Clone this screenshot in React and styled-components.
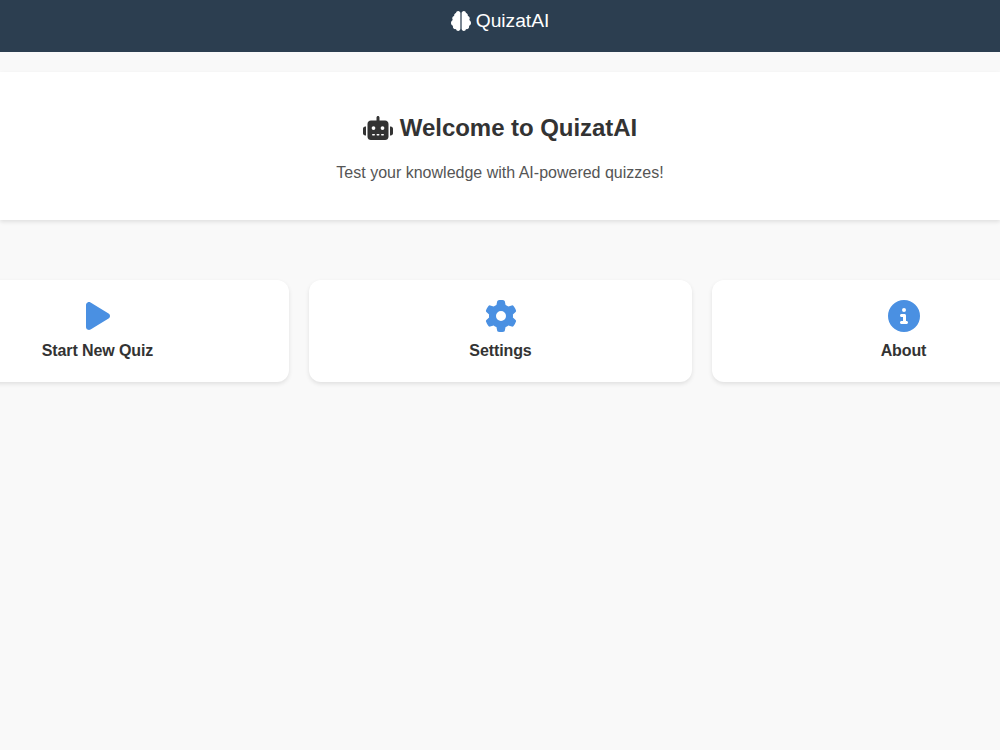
import styled, { createGlobalStyle } from "styled-components";
import { FaBrain, FaCircleInfo, FaGear, FaPlay, FaRobot } from "react-icons/fa6";

const GlobalStyle = createGlobalStyle`
  html, body {
    margin: 0;
    padding: 0;
    overflow-x: hidden;
  }

  body {
    background-color: #f9f9f9;
    color: #333;
    font-family: "Liberation Sans", Arial, sans-serif;
  }
`;

const Page = styled.div`
  min-height: 750px;
  display: flex;
  flex-direction: column;
  align-items: center;
`;

const Header = styled.header`
  width: 100%;
  height: 52px;
  padding-top: 10px;
  box-sizing: border-box;
  background-color: #2c3e50;
  color: #fff;
  display: flex;
  justify-content: center;
  align-items: flex-start;
  gap: 5px;
  font-size: 19.2px;
  line-height: 22px;

  svg {
    font-size: 20px;
    margin-top: 1px;
  }
`;

const Hero = styled.section`
  align-self: stretch;
  height: 148px;
  margin-top: 20px;
  background-color: #fff;
  box-shadow: 0 2px 4px rgba(0, 0, 0, 0.1);
  display: flex;
  flex-direction: column;
  align-items: center;
  padding-top: 41px;
  box-sizing: border-box;
`;

const Title = styled.h1`
  margin: 0;
  display: flex;
  align-items: center;
  gap: 7px;
  font-size: 24px;
  line-height: 30px;
  font-weight: 700;
  letter-spacing: -0.05px;

  svg {
    font-size: 30px;
  }
`;

const Subtitle = styled.p`
  margin: 20px 0 0;
  font-size: 16px;
  line-height: 20px;
  color: #555;
`;

const Menu = styled.nav`
  display: flex;
  justify-content: center;
  gap: 20px;
  margin-top: 60px;
  padding-left: 1px;
  box-sizing: border-box;
  width: 100%;
`;

const MenuCard = styled.a`
  flex: 0 0 383px;
  height: 102px;
  padding-top: 20px;
  box-sizing: border-box;
  background-color: #fff;
  border-radius: 12px;
  box-shadow: 0 2px 4px rgba(0, 0, 0, 0.1);
  display: flex;
  flex-direction: column;
  align-items: center;
  gap: 9px;
  font-size: 16px;
  line-height: 20px;
  font-weight: 700;
  letter-spacing: -0.1px;
  color: #333;

  svg {
    color: #4a90e2;
    font-size: 32px;
  }
`;

const items = [
  { label: "Start New Quiz", icon: <FaPlay /> },
  { label: "Settings", icon: <FaGear /> },
  { label: "About", icon: <FaCircleInfo /> },
];

const App = () => {
  return (
    <Page>
      <GlobalStyle />
      <Header>
        <FaBrain />
        <span>QuizatAI</span>
      </Header>
      <Hero>
        <Title>
          <FaRobot />
          Welcome to QuizatAI
        </Title>
        <Subtitle>Test your knowledge with AI-powered quizzes!</Subtitle>
      </Hero>
      <Menu>
        {items.map((item) => (
          <MenuCard key={item.label}>
            {item.icon}
            {item.label}
          </MenuCard>
        ))}
      </Menu>
    </Page>
  );
};

export default App;
